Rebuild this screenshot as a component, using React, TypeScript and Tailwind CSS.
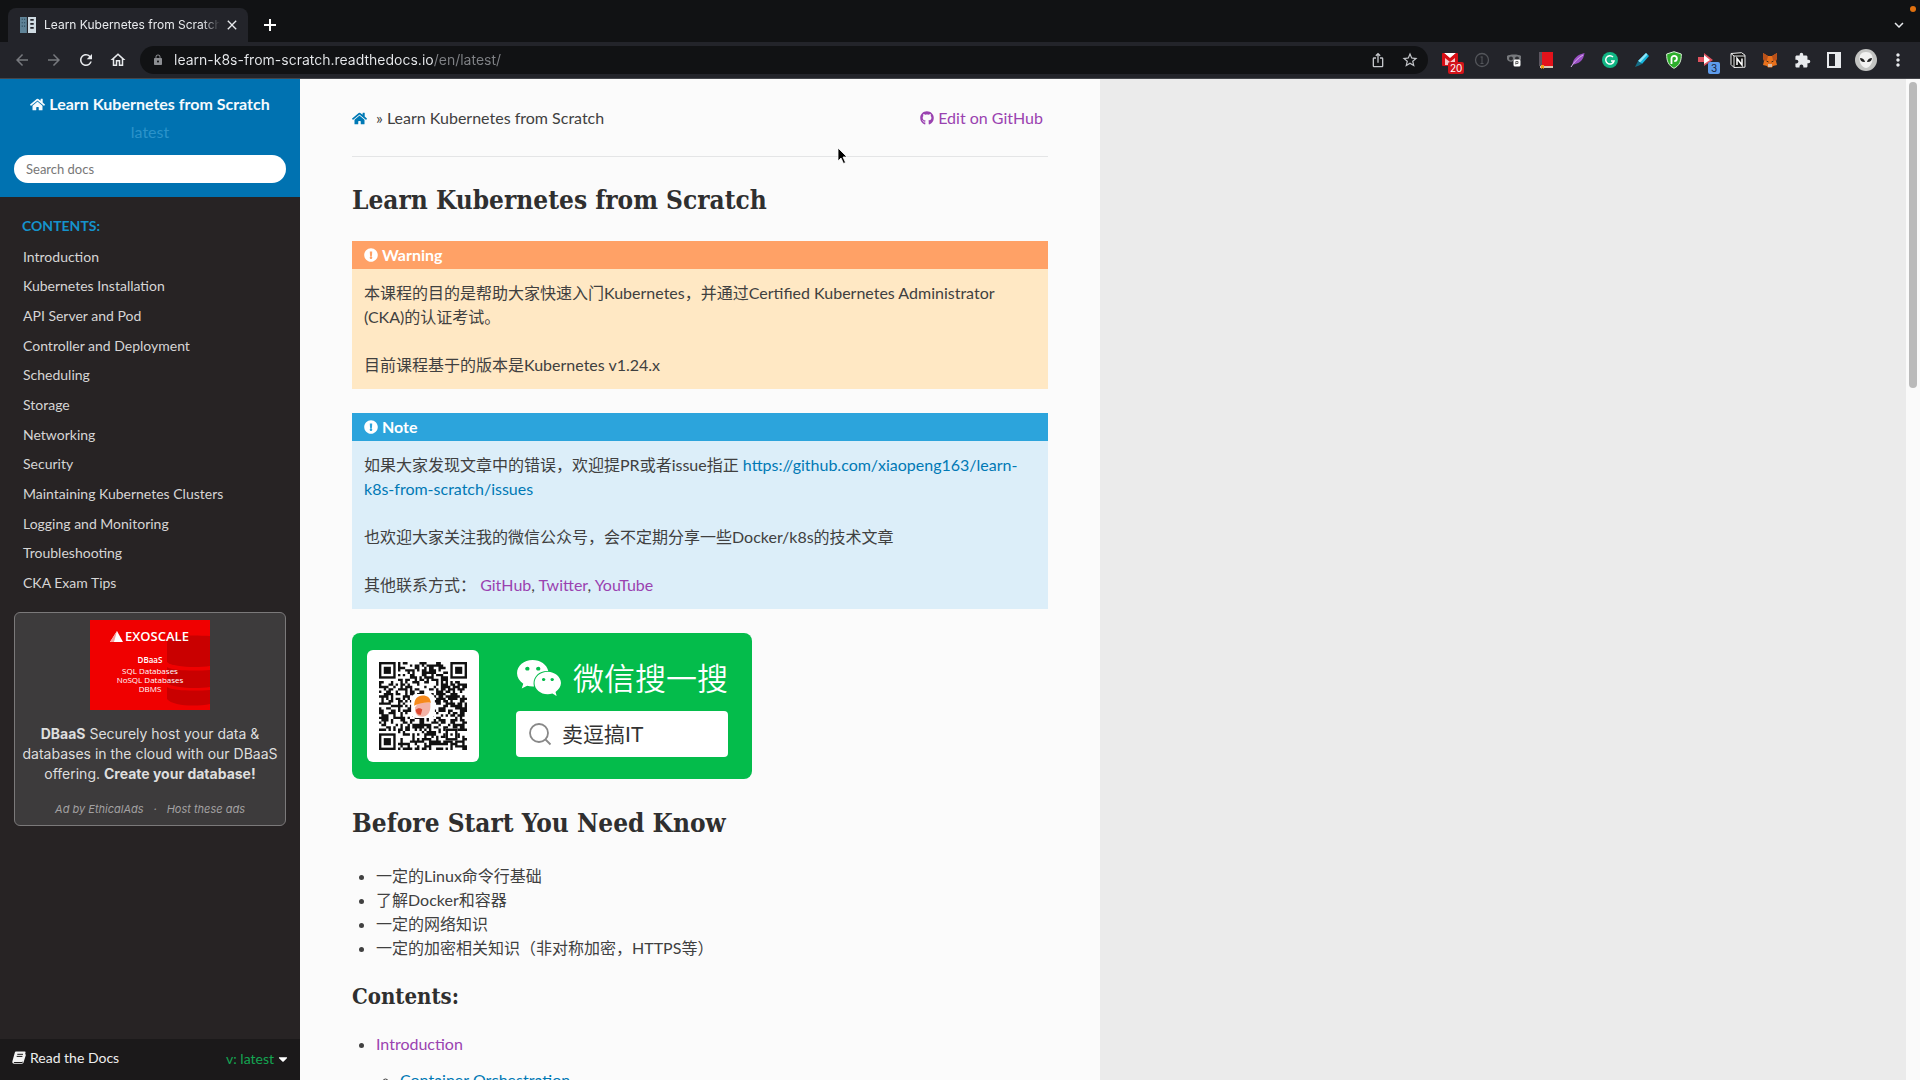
import { ReactNode } from 'react';
import { FaCaretDown, FaExclamationCircle, FaGithub, FaHome, FaWeixin } from 'react-icons/fa';
import {
  MdArrowBack,
  MdArrowForward,
  MdClose,
  MdExpandMore,
  MdExtension,
  MdIosShare,
  MdLock,
  MdMoreVert,
  MdOutlineHome,
  MdRefresh,
  MdStarBorder,
} from 'react-icons/md';

const menuItems = [
  'Introduction',
  'Kubernetes Installation',
  'API Server and Pod',
  'Controller and Deployment',
  'Scheduling',
  'Storage',
  'Networking',
  'Security',
  'Maintaining Kubernetes Clusters',
  'Logging and Monitoring',
  'Troubleshooting',
  'CKA Exam Tips',
];

const requirements = [
  '一定的Linux命令行基础',
  '了解Docker和容器',
  '一定的网络知识',
  '一定的加密相关知识（非对称加密，HTTPS等）',
];

const QR_SIZE = 37;

const inFinder = (x: number, y: number) =>
  (x < 8 && y < 8) || (x > QR_SIZE - 9 && y < 8) || (x < 8 && y > QR_SIZE - 9);

const qrPath = () => {
  let seed = 163;
  let path = '';
  for (let y = 0; y < QR_SIZE; y++) {
    for (let x = 0; x < QR_SIZE; x++) {
      seed = (seed * 1103515245 + 12345) % 2147483648;
      const inAlignment = Math.abs(x - 30) < 3 && Math.abs(y - 30) < 3;
      const dark = seed / 2147483648 > 0.48;
      if (!inFinder(x, y) && !inAlignment && dark) {
        path += `M${x} ${y}h1v1h-1z`;
      }
    }
  }
  return path;
};

const QrCode = (): JSX.Element => (
  <svg viewBox="0 0 37 37" className="size-22" role="img" aria-label="WeChat QR code">
    <path d={qrPath()} fill="#111" />
    {[
      [0, 0],
      [30, 0],
      [0, 30],
    ].map(([x, y]) => (
      <g key={`${x}-${y}`}>
        <rect x={x + 0.5} y={y + 0.5} width="6" height="6" fill="#fff" stroke="#111" />
        <rect x={x + 2} y={y + 2} width="3" height="3" fill="#111" />
      </g>
    ))}
    <rect x="28.5" y="28.5" width="4" height="4" fill="#fff" stroke="#111" />
    <rect x="30" y="30" width="1" height="1" fill="#111" />
    <rect x="13.5" y="13.5" width="10" height="10" rx="2" fill="#fff" />
    <path d="M15.2 19c-.3 2.600.8 4 3 4 2 0 3.400-1.800 3.400-4.200v-1.800h-5z" fill="#f3b3a6" />
    <path d="M15.400 20.200c.8-.9 2-.9 2.800-.2l-.6 2.200c-1.200.2-2-.6-2.200-2z" fill="#dc4a32" />
    <path d="M14.800 18.400c0-2.800 1.400-4.300 3.600-4.300 2 0 3.200 1 3.400 3-2.600-.2-4.700.2-7 1.300z" fill="#f58a1c" />
  </svg>
);

const BookIcon = (): JSX.Element => (
  <svg viewBox="0 0 14 13" className="h-[13px] w-3.5">
    <path
      d="M4.200.5h8.300c.8 0 1.200.5 1 1.300l-2.200 8c-.2.700-.7 1.200-1.500 1.200H2.200c-.6 0-.6.900.2.900h8l2.800-9c.8.500.7 1 .5 1.600l-2.200 7c-.2.700-.8 1.200-1.500 1.200H2.200C.8 12.700 0 11.600.4 10.200l2.300-8.300C3 1 3.500.5 4.200.5z"
      fill="#f4f4f4"
    />
    <path d="M5.300 3.300h5.700M4.700 5.400h5.700" stroke="#1b191a" />
  </svg>
);

interface IIconProps {
  label: string;
  children: ReactNode;
}

const ToolbarButton = ({ label, children }: IIconProps): JSX.Element => (
  <button aria-label={label} className="relative flex h-8 w-8 items-center justify-center">
    {children}
  </button>
);

const Extensions = (): JSX.Element => (
  <div className="flex items-center text-[#e8eaed]">
    <ToolbarButton label="Mail checker">
      <svg viewBox="0 0 16 16" className="size-4">
        <rect y="1" width="16" height="13" rx="1" fill="#d80f16" />
        <path d="M2 1l6 5 6-5z" fill="#fff" />
        <path d="M3 6l5 4 5-4v7H3z" fill="#f3c9cb" />
        <path d="M2 2l6 6 6-6" stroke="#d80f16" strokeWidth="1.500" fill="none" />
      </svg>
      <span className="absolute top-[18px] left-3.5 rounded-xs bg-[#d3141b] px-0.5 text-[10px] leading-3 text-white">
        20
      </span>
    </ToolbarButton>
    <ToolbarButton label="Page info">
      <svg viewBox="0 0 16 16" className="size-4" fill="none" stroke="#54565b">
        <circle cx="8" cy="8" r="6.500" strokeWidth="1.300" />
        <path d="M8 4.500v7M6.500 5h2M6.500 11.500h3" />
      </svg>
    </ToolbarButton>
    <ToolbarButton label="Privacy">
      <svg viewBox="0 0 16 16" className="size-4">
        <path d="M1 4c2-2 12-2 14 0v3c-1 3-5 4-7 1-2 3-6 2-7-1z" fill="#77797d" />
        <circle cx="5" cy="6.500" r="2" fill="#2b2c31" />
        <circle cx="11" cy="6.500" r="2" fill="#2b2c31" />
        <rect x="7.500" y="7.500" width="7" height="7" rx="1.500" fill="#fff" />
        <path d="M9.800 12.500V9.500h2.200v2H9.800" stroke="#444" strokeWidth=".8" fill="none" />
      </svg>
    </ToolbarButton>
    <ToolbarButton label="Bookmarks">
      <svg viewBox="0 0 16 18" className="h-[18px] w-4">
        <path d="M1 1h3v14H1z" fill="#5c5560" />
        <path d="M4 1h11v14H4z" fill="#e3131b" />
        <path d="M2 15h13v2H2z" fill="#d9c9b4" />
        <path d="M3 14h3v4l-1.500-1L3 18z" fill="#f2a516" />
      </svg>
    </ToolbarButton>
    <ToolbarButton label="Feather">
      <svg viewBox="0 0 16 16" className="size-4">
        <path d="M14.500 1C8 2.500 3 6 2.500 12.500c6-.5 11-3.500 12-11.500z" fill="#9a4fc4" />
        <path d="M1 15C4 10 8 6 13 3" stroke="#d9b2ee" fill="none" />
      </svg>
    </ToolbarButton>
    <ToolbarButton label="Grammar">
      <svg viewBox="0 0 16 16" className="size-4">
        <circle cx="8" cy="8" r="8" fill="#11b584" />
        <path d="M11 5a4.200 4.200 0 1 0 1 4H9" stroke="#fff" strokeWidth="1.500" fill="none" />
      </svg>
    </ToolbarButton>
    <ToolbarButton label="Highlighter">
      <svg viewBox="0 0 16 16" className="size-4">
        <path d="M12 1l3 3-7 8-4-3z" fill="#18b7de" />
        <path d="M12 1l1.500 1.500L6 10.500 4 9z" fill="#8fe6f7" />
        <path d="M4 9l4 3-3 1.500L1 15l1.500-3z" fill="#156d86" />
      </svg>
    </ToolbarButton>
    <ToolbarButton label="Shield">
      <svg viewBox="0 0 16 18" className="h-[18px] w-4">
        <path d="M8 .7L15.300 3c.2 7-1.800 11.500-7.300 14.300C2.500 14.500.5 10 .7 3z" fill="#2dae2b" stroke="#d8f0d6" />
        <path d="M5.500 13V7.500a2.700 2.700 0 1 1 2.700 2.700" stroke="#fff" strokeWidth="1.800" fill="none" />
      </svg>
    </ToolbarButton>
    <ToolbarButton label="Redirect">
      <svg viewBox="0 0 16 16" className="size-4">
        <path d="M0 5h6V1l9 7-9 6v-4H0z" fill="#e0525f" />
        <path d="M6 3l6 5-6 4z" fill="#fff" />
      </svg>
      <span className="absolute top-[18px] left-[18px] rounded-xs bg-[#5e9bea] px-[3px] text-[10px] leading-3 text-[#15233b]">
        3
      </span>
    </ToolbarButton>
    <ToolbarButton label="Notion">
      <svg viewBox="0 0 16 16" className="size-4">
        <path d="M1 1.500L11.500.7l3.500 2.500v12L4 15.500l-3-3z" fill="#111" stroke="#eee" />
        <path d="M4 4h11M4 4v11.500M1 1.500L4 4" stroke="#eee" fill="none" />
        <path d="M7 13V6.500l5 6.500V6.500" stroke="#fff" strokeWidth="1.500" fill="none" />
      </svg>
    </ToolbarButton>
    <ToolbarButton label="Wallet">
      <svg viewBox="0 0 16 16" className="size-4">
        <path d="M1 1l5 3h4l5-3v5l-1 3 1 4-4 1-1 1.500H6L5 14l-4-1 1-4-1-3z" fill="#e8711c" />
        <path d="M1 1l5 3-1 4-3 1-1-3zM15 1l-5 3 1 4 3 1 1-3z" fill="#b9511a" />
        <path d="M6 12h4v3H6z" fill="#d8b9a0" />
        <path d="M4.500 9l2 1M11.500 9l-2 1" stroke="#3a2416" />
      </svg>
    </ToolbarButton>
    <ToolbarButton label="Extensions">
      <MdExtension className="size-[17px]" />
    </ToolbarButton>
    <ToolbarButton label="Side panel">
      <svg viewBox="0 0 14 16" className="h-4 w-3.5">
        <path d="M0 0h14v16H0zM2 2v12h6V2z" fill="#e8eaed" fillRule="evenodd" />
      </svg>
    </ToolbarButton>
    <ToolbarButton label="Profile">
      <svg viewBox="0 0 22 22" className="size-[22px]">
        <circle cx="11" cy="11" r="11" fill="#c3c4c2" />
        <path d="M11 3c5 0 7 3 6.500 8-.5 4-3.500 8-6.500 8s-6-4-6.500-8C4 6 6 3 11 3z" fill="#f1f1f0" />
        <path d="M5 9c2.500 0 4.500 1.500 5 4-3 .3-4.800-1-5-4zM17 9c-2.500 0-4.500 1.500-5 4 3 .3 4.800-1 5-4z" fill="#222" />
      </svg>
    </ToolbarButton>
    <ToolbarButton label="Menu">
      <MdMoreVert className="size-5" />
    </ToolbarButton>
  </div>
);

const BrowserChrome = (): JSX.Element => (
  <header className="shrink-0 bg-[#111214] font-['Inter','Noto_Sans',sans-serif]">
    <div className="relative flex h-[42px] items-end pr-3 pl-2">
      <div className="flex h-[34px] w-60 items-center rounded-t-lg bg-[#23242a] pr-2 pl-3">
        <svg viewBox="0 0 14 14" className="mr-2 size-4 shrink-0">
          <path d="M0 0h6v14H0z" fill="#5f8397" />
          <path d="M1.500 2h3M1.500 5h3M1.500 8h3" stroke="#2c4a5c" strokeDasharray="1 1" />
          <path d="M7 0h7v14H7z" fill="#cfdbe2" />
          <path d="M9 2.500h3M9 6h3M9 9.500h3" stroke="#23242a" strokeWidth="1.500" />
        </svg>
        <span className="flex-1 overflow-hidden mask-r-from-90% text-xs whitespace-nowrap text-[#e8eaed]">
          Learn Kubernetes from Scratch
        </span>
        <button aria-label="Close tab" className="ml-1 text-[#e8eaed]">
          <MdClose className="size-4" />
        </button>
      </div>
      <button aria-label="New tab" className="flex h-[34px] w-11 items-center justify-center">
        <svg viewBox="0 0 12 12" className="size-3" stroke="#fff" strokeWidth="2">
          <path d="M6 0v12M0 6h12" />
        </svg>
      </button>
      <button aria-label="Search tabs" className="mb-2 ml-auto text-[#e8eaed]">
        <MdExpandMore className="size-[18px]" />
      </button>
      <span className="absolute top-1.5 right-1 size-1.5 rounded-full bg-[#e0700f]" />
    </div>
    <div className="flex h-[37px] items-center border-b border-[#45464b] bg-[#23242a] pr-1.5 pl-1.5">
      <div className="flex text-[#e8eaed]">
        <button aria-label="Back" className="flex w-8 justify-center text-[#77797e]">
          <MdArrowBack className="size-[18px]" />
        </button>
        <button aria-label="Forward" className="flex w-8 justify-center text-[#77797e]">
          <MdArrowForward className="size-[18px]" />
        </button>
        <button aria-label="Reload" className="flex w-8 justify-center">
          <MdRefresh className="size-[18px]" />
        </button>
        <button aria-label="Home" className="flex w-8 justify-center">
          <MdOutlineHome className="size-[18px]" />
        </button>
      </div>
      <div className="mr-1.5 ml-1.5 flex h-7 flex-1 items-center rounded-full bg-[#111214] pr-0.5 pl-3">
        <MdLock className="mr-2.5 size-3 text-[#8c8e92]" />
        <input
          type="text"
          aria-label="Address"
          defaultValue="learn-k8s-from-scratch.readthedocs.io/en/latest/"
          className="flex-1 bg-[linear-gradient(to_right,#e8eaed_259px,#808286_259px)] bg-clip-text text-sm text-transparent outline-none"
        />
        <div className="flex text-[#c4c6ca]">
          <ToolbarButton label="Share">
            <MdIosShare className="size-4" />
          </ToolbarButton>
          <ToolbarButton label="Bookmark this page">
            <MdStarBorder className="size-[18px]" />
          </ToolbarButton>
        </div>
      </div>
      <Extensions />
    </div>
  </header>
);

const AdBox = (): JSX.Element => (
  <div className="mx-3.5 mt-3.5 flex flex-col items-center rounded-md border border-[#7b797a] bg-[#3d3b3c] px-1 pt-[7px] pb-1.5 text-center font-['Inter','Noto_Sans',sans-serif] text-[#dedede]">
    <div className="relative h-[90px] w-[120px] overflow-hidden bg-[#f00000] text-white">
      <svg viewBox="0 0 120 90" className="absolute inset-0">
        <path d="M77 18c6-3 30-3 43-2v30c-14 2-38 1-43-4z" fill="#c90000" />
        <path d="M77 47c6 4 28 4 43 3v17c-14 2-38 1-43-4z" fill="#c90000" />
        <path d="M77 67c6 4 28 4 43 3v14c-14 3-38 2-43-5z" fill="#c90000" />
        <path d="M27 11l6 11H20z" fill="#fff" />
        <path d="M27 11l-7 11h4z" fill="#f6a0a0" />
      </svg>
      <div className="relative font-['Open_Sans',sans-serif]">
        <p className="pt-2.5 pl-[35px] text-left text-[13px] leading-3 font-semibold">EXOSCALE</p>
        <p className="mt-3 text-[8px] leading-3 font-semibold">DBaaS</p>
        <p className="text-[8px] leading-[9px]">SQL Databases</p>
        <p className="text-[8px] leading-[9px]">NoSQL Databases</p>
        <p className="text-[8px] leading-[9px]">DBMS</p>
      </div>
    </div>
    <a href="#ad" className="mt-3.5 text-sm leading-5">
      <strong>DBaaS</strong> Securely host your data &amp; databases in the cloud with our DBaaS
      offering. <strong>Create your database!</strong>
    </a>
    <p className="mt-[15px] flex gap-2.5 text-[11px] leading-5 text-[#a3a1a2] italic">
      <a href="#ethical-ads">Ad by EthicalAds</a>
      <span>·</span>
      <a href="#host-ads">Host these ads</a>
    </p>
  </div>
);

const Sidebar = (): JSX.Element => (
  <nav className="flex w-[300px] shrink-0 flex-col bg-[#272324]">
    <div className="flex flex-col items-center bg-[#0072b1] px-3.5 pt-[11px] pb-3.5">
      <a href="#home" className="flex items-center gap-1 leading-7 font-bold text-[#f5fafd]">
        <FaHome className="size-[15px]" />
        Learn Kubernetes from Scratch
      </a>
      <span className="leading-7 text-[#2b93ca]">latest</span>
      <input
        type="text"
        aria-label="Search docs"
        placeholder="Search docs"
        className="mt-[9px] h-7 w-full rounded-full bg-white px-3 text-[13px] placeholder:text-[#777]"
      />
    </div>
    <p className="mt-[17px] pl-[22px] text-sm leading-6 font-bold text-[#1593cc]">CONTENTS:</p>
    <ul className="mt-1 grid h-[356px] shrink-0 auto-rows-fr text-[#d6d5d5]">
      {menuItems.map((item) => (
        <li key={item} className="flex items-center pl-[23px] text-sm">
          <a href="#toc">{item}</a>
        </li>
      ))}
    </ul>
    <AdBox />
    <div className="mt-auto flex h-[41px] items-center justify-between bg-[#1b191a] pr-2.5 pb-1 pl-3 text-sm text-[#eee]">
      <a href="#rtd" className="flex items-center gap-1">
        <BookIcon />
        Read the Docs
      </a>
      <button className="flex items-center gap-0.5 pt-0.5 text-[#14a552]">
        v: latest
        <FaCaretDown className="size-3.5 text-white" />
      </button>
    </div>
  </nav>
);

interface IAdmonitionProps {
  title: string;
  titleClass: string;
  bodyClass: string;
  children: ReactNode;
}

const Admonition = (props: IAdmonitionProps): JSX.Element => {
  const { title, titleClass, bodyClass, children } = props;

  return (
    <section className={`mb-6 ${bodyClass}`}>
      <p className={`flex h-7 items-center gap-1 px-3 font-bold text-white ${titleClass}`}>
        <FaExclamationCircle className="size-3.5" />
        {title}
      </p>
      <div className="flex flex-col gap-6 p-3">{children}</div>
    </section>
  );
};

const WechatBanner = (): JSX.Element => (
  <div className="flex h-[146px] w-[400px] items-center rounded-lg bg-[#04bc4b] pl-[15px]">
    <div className="flex size-28 items-center justify-center rounded-md bg-white">
      <QrCode />
    </div>
    <div className="ml-[37px] flex w-53 flex-col gap-2.5">
      <div className="flex items-center justify-between text-white">
        <FaWeixin className="size-[46px]" />
        <span className="text-[31px] leading-[46px] font-[350] whitespace-nowrap">微信搜一搜</span>
      </div>
      <div className="flex h-[46px] items-center gap-2.5 rounded-sm bg-white pl-3">
        <svg viewBox="0 0 24 24" className="size-6" fill="none" stroke="#888" strokeWidth="1.800">
          <circle cx="11" cy="11" r="9" />
          <path d="M17.500 17.500l5 5" />
        </svg>
        <span className="text-[21px] text-[#333]">卖逗搞IT</span>
      </div>
    </div>
  </div>
);

const headingFont =
  "font-['Roboto_Slab','DejaVu_Serif_Condensed','DejaVu_Serif',serif] font-bold text-[#2f2f2f]";

const Article = (): JSX.Element => (
  <main className="max-w-[800px] flex-1 overflow-hidden bg-[#fbfbfb] px-13 pt-[27px]">
    <div className="relative flex items-center justify-between border-b border-[#e4e5e6] pb-[26px]">
      <div className="flex items-center">
        <a href="#home" aria-label="Home" className="text-[#0079b5]">
          <FaHome className="size-[15px]" />
        </a>
        <span className="ml-[9px]">» Learn Kubernetes from Scratch</span>
      </div>
      <a href="#github" className="mr-[5px] flex items-center gap-1 text-[#9a42b0]">
        <FaGithub className="size-3.5" />
        Edit on GitHub
      </a>
      <svg viewBox="0 0 12 18" className="absolute top-[41px] left-[485px] h-[18px] w-3">
        <path d="M1 1v13l3-3 2.500 5.500 2-1L6 10h4z" fill="#000" stroke="#fff" strokeWidth=".8" />
      </svg>
    </div>
    <h1 className={`mt-[25px] mb-[23px] text-[26px] leading-9 ${headingFont}`}>
      Learn Kubernetes from Scratch
    </h1>
    <Admonition title="Warning" titleClass="bg-[#ffa166]" bodyClass="bg-[#ffe8c4]">
      <p>
        本课程的目的是帮助大家快速入门Kubernetes，并通过Certified Kubernetes Administrator
        (CKA)的认证考试。
      </p>
      <p>目前课程基于的版本是Kubernetes v1.24.x</p>
    </Admonition>
    <Admonition title="Note" titleClass="bg-[#2ca4dc]" bodyClass="bg-[#dceef9]">
      <p>
        如果大家发现文章中的错误，欢迎提PR或者issue指正{' '}
        <a href="#issues" className="text-[#0079b5]">
          https://github.com/xiaopeng163/learn-k8s-from-scratch/issues
        </a>
      </p>
      <p>也欢迎大家关注我的微信公众号，会不定期分享一些Docker/k8s的技术文章</p>
      <p>
        其他联系方式：{' '}
        <a href="#gh" className="text-[#9a42b0]">
          GitHub
        </a>
        ,{' '}
        <a href="#tw" className="text-[#9a42b0]">
          Twitter
        </a>
        ,{' '}
        <a href="#yt" className="text-[#9a42b0]">
          YouTube
        </a>
      </p>
    </Admonition>
    <WechatBanner />
    <h1 className={`mt-[26px] mb-[23px] text-[26px] leading-9 ${headingFont}`}>
      Before Start You Need Know
    </h1>
    <ul className="list-disc pl-6">
      {requirements.map((item) => (
        <li key={item}>{item}</li>
      ))}
    </ul>
    <h2 className={`mt-5 mb-5 text-[22px] leading-8 ${headingFont}`}>Contents:</h2>
    <ul className="list-disc pl-6">
      <li>
        <a href="#introduction" className="text-[#9a42b0]">
          Introduction
        </a>
        <ul className="mt-3 list-[circle] pl-6">
          <li>
            <a href="#orchestration" className="text-[#0079b5]">
              Container Orchestration
            </a>
          </li>
        </ul>
      </li>
    </ul>
  </main>
);

const App = (): JSX.Element => (
  <div className="flex h-screen flex-col overflow-hidden">
    <BrowserChrome />
    <div
      lang="zh-CN"
      className="flex min-h-0 flex-1 bg-[#ebebeb] font-['Lato','Noto_Sans_CJK_SC',sans-serif] text-base leading-6 text-[#404040]"
    >
      <Sidebar />
      <Article />
      <div className="ml-auto w-3.5 bg-[#fafafa] px-[3px] pt-[3px]">
        <div className="h-[306px] rounded-full bg-[#bababa]" />
      </div>
    </div>
  </div>
);

export default App;
